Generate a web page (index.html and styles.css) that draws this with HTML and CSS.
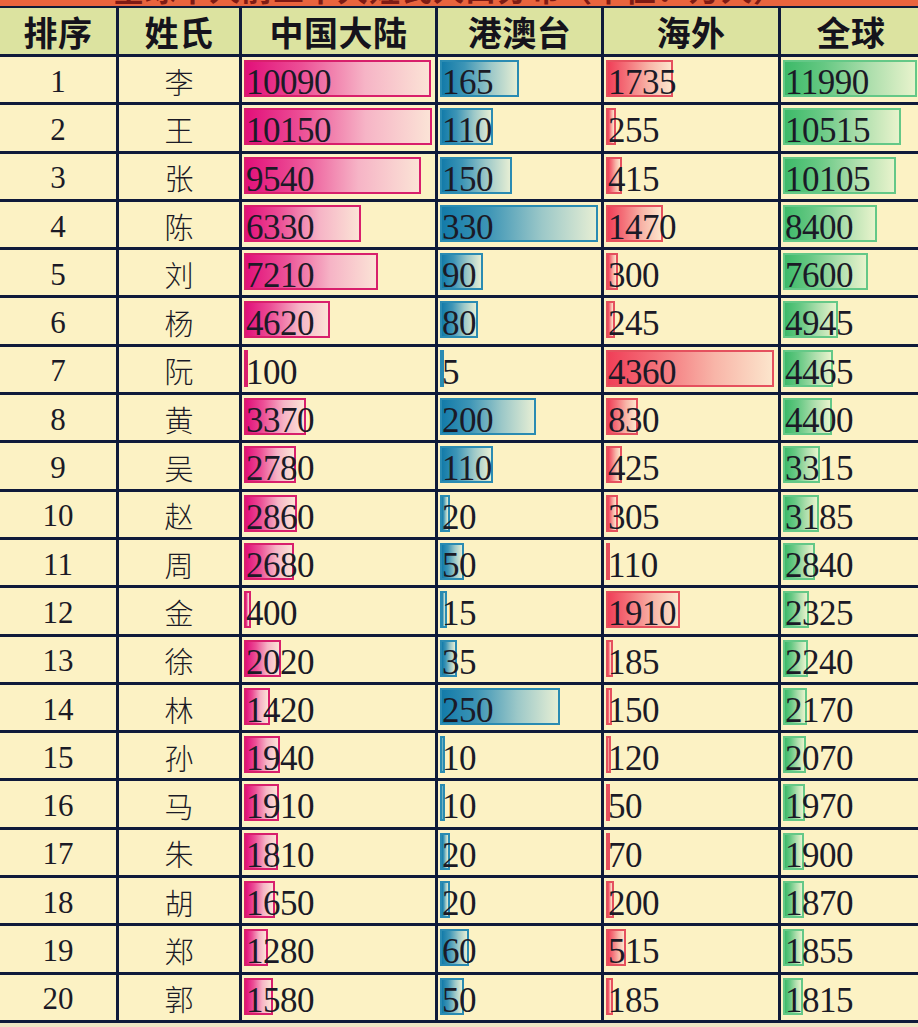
FILE: index.html
```html
<!DOCTYPE html>
<html lang="zh">
<head>
<meta charset="utf-8">
<title>姓氏排行</title>
<link rel="stylesheet" href="styles.css">
</head>
<body>
<div class="title"><span class="title-text">全球华人前二十大姓氏人口分布（单位：万人）</span></div>
<div class="table">
  <div class="h">排序</div><div class="h">姓氏</div><div class="h">中国大陆</div><div class="h">港澳台</div><div class="h">海外</div><div class="h">全球</div>

  <div class="c rank">1</div><div class="c name">李</div>
  <div class="c v"><i class="bar pink" style="width:187px"></i><span class="num">10090</span></div>
  <div class="c v"><i class="bar blue" style="width:79px"></i><span class="num">165</span></div>
  <div class="c v"><i class="bar red" style="width:67px"></i><span class="num">1735</span></div>
  <div class="c v"><i class="bar green" style="width:134px"></i><span class="num">11990</span></div>

  <div class="c rank">2</div><div class="c name">王</div>
  <div class="c v"><i class="bar pink" style="width:188px"></i><span class="num">10150</span></div>
  <div class="c v"><i class="bar blue" style="width:53px"></i><span class="num">110</span></div>
  <div class="c v"><i class="bar red" style="width:10px"></i><span class="num">255</span></div>
  <div class="c v"><i class="bar green" style="width:118px"></i><span class="num">10515</span></div>

  <div class="c rank">3</div><div class="c name">张</div>
  <div class="c v"><i class="bar pink" style="width:177px"></i><span class="num">9540</span></div>
  <div class="c v"><i class="bar blue" style="width:72px"></i><span class="num">150</span></div>
  <div class="c v"><i class="bar red" style="width:16px"></i><span class="num">415</span></div>
  <div class="c v"><i class="bar green" style="width:113px"></i><span class="num">10105</span></div>

  <div class="c rank">4</div><div class="c name">陈</div>
  <div class="c v"><i class="bar pink" style="width:117px"></i><span class="num">6330</span></div>
  <div class="c v"><i class="bar blue" style="width:158px"></i><span class="num">330</span></div>
  <div class="c v"><i class="bar red" style="width:57px"></i><span class="num">1470</span></div>
  <div class="c v"><i class="bar green" style="width:94px"></i><span class="num">8400</span></div>

  <div class="c rank">5</div><div class="c name">刘</div>
  <div class="c v"><i class="bar pink" style="width:134px"></i><span class="num">7210</span></div>
  <div class="c v"><i class="bar blue" style="width:43px"></i><span class="num">90</span></div>
  <div class="c v"><i class="bar red" style="width:12px"></i><span class="num">300</span></div>
  <div class="c v"><i class="bar green" style="width:85px"></i><span class="num">7600</span></div>

  <div class="c rank">6</div><div class="c name">杨</div>
  <div class="c v"><i class="bar pink" style="width:86px"></i><span class="num">4620</span></div>
  <div class="c v"><i class="bar blue" style="width:38px"></i><span class="num">80</span></div>
  <div class="c v"><i class="bar red" style="width:9px"></i><span class="num">245</span></div>
  <div class="c v"><i class="bar green" style="width:55px"></i><span class="num">4945</span></div>

  <div class="c rank">7</div><div class="c name">阮</div>
  <div class="c v"><i class="bar pink" style="width:3px"></i><span class="num">100</span></div>
  <div class="c v"><i class="bar blue" style="width:3px"></i><span class="num">5</span></div>
  <div class="c v"><i class="bar red" style="width:168px"></i><span class="num">4360</span></div>
  <div class="c v"><i class="bar green" style="width:50px"></i><span class="num">4465</span></div>

  <div class="c rank">8</div><div class="c name">黄</div>
  <div class="c v"><i class="bar pink" style="width:62px"></i><span class="num">3370</span></div>
  <div class="c v"><i class="bar blue" style="width:96px"></i><span class="num">200</span></div>
  <div class="c v"><i class="bar red" style="width:32px"></i><span class="num">830</span></div>
  <div class="c v"><i class="bar green" style="width:49px"></i><span class="num">4400</span></div>

  <div class="c rank">9</div><div class="c name">吴</div>
  <div class="c v"><i class="bar pink" style="width:52px"></i><span class="num">2780</span></div>
  <div class="c v"><i class="bar blue" style="width:53px"></i><span class="num">110</span></div>
  <div class="c v"><i class="bar red" style="width:16px"></i><span class="num">425</span></div>
  <div class="c v"><i class="bar green" style="width:37px"></i><span class="num">3315</span></div>

  <div class="c rank">10</div><div class="c name">赵</div>
  <div class="c v"><i class="bar pink" style="width:53px"></i><span class="num">2860</span></div>
  <div class="c v"><i class="bar blue" style="width:10px"></i><span class="num">20</span></div>
  <div class="c v"><i class="bar red" style="width:12px"></i><span class="num">305</span></div>
  <div class="c v"><i class="bar green" style="width:36px"></i><span class="num">3185</span></div>

  <div class="c rank">11</div><div class="c name">周</div>
  <div class="c v"><i class="bar pink" style="width:50px"></i><span class="num">2680</span></div>
  <div class="c v"><i class="bar blue" style="width:24px"></i><span class="num">50</span></div>
  <div class="c v"><i class="bar red" style="width:4px"></i><span class="num">110</span></div>
  <div class="c v"><i class="bar green" style="width:32px"></i><span class="num">2840</span></div>

  <div class="c rank">12</div><div class="c name">金</div>
  <div class="c v"><i class="bar pink" style="width:7px"></i><span class="num">400</span></div>
  <div class="c v"><i class="bar blue" style="width:7px"></i><span class="num">15</span></div>
  <div class="c v"><i class="bar red" style="width:74px"></i><span class="num">1910</span></div>
  <div class="c v"><i class="bar green" style="width:26px"></i><span class="num">2325</span></div>

  <div class="c rank">13</div><div class="c name">徐</div>
  <div class="c v"><i class="bar pink" style="width:37px"></i><span class="num">2020</span></div>
  <div class="c v"><i class="bar blue" style="width:17px"></i><span class="num">35</span></div>
  <div class="c v"><i class="bar red" style="width:7px"></i><span class="num">185</span></div>
  <div class="c v"><i class="bar green" style="width:25px"></i><span class="num">2240</span></div>

  <div class="c rank">14</div><div class="c name">林</div>
  <div class="c v"><i class="bar pink" style="width:26px"></i><span class="num">1420</span></div>
  <div class="c v"><i class="bar blue" style="width:120px"></i><span class="num">250</span></div>
  <div class="c v"><i class="bar red" style="width:6px"></i><span class="num">150</span></div>
  <div class="c v"><i class="bar green" style="width:24px"></i><span class="num">2170</span></div>

  <div class="c rank">15</div><div class="c name">孙</div>
  <div class="c v"><i class="bar pink" style="width:36px"></i><span class="num">1940</span></div>
  <div class="c v"><i class="bar blue" style="width:5px"></i><span class="num">10</span></div>
  <div class="c v"><i class="bar red" style="width:5px"></i><span class="num">120</span></div>
  <div class="c v"><i class="bar green" style="width:23px"></i><span class="num">2070</span></div>

  <div class="c rank">16</div><div class="c name">马</div>
  <div class="c v"><i class="bar pink" style="width:35px"></i><span class="num">1910</span></div>
  <div class="c v"><i class="bar blue" style="width:5px"></i><span class="num">10</span></div>
  <div class="c v"><i class="bar red" style="width:3px"></i><span class="num">50</span></div>
  <div class="c v"><i class="bar green" style="width:22px"></i><span class="num">1970</span></div>

  <div class="c rank">17</div><div class="c name">朱</div>
  <div class="c v"><i class="bar pink" style="width:34px"></i><span class="num">1810</span></div>
  <div class="c v"><i class="bar blue" style="width:10px"></i><span class="num">20</span></div>
  <div class="c v"><i class="bar red" style="width:3px"></i><span class="num">70</span></div>
  <div class="c v"><i class="bar green" style="width:21px"></i><span class="num">1900</span></div>

  <div class="c rank">18</div><div class="c name">胡</div>
  <div class="c v"><i class="bar pink" style="width:31px"></i><span class="num">1650</span></div>
  <div class="c v"><i class="bar blue" style="width:10px"></i><span class="num">20</span></div>
  <div class="c v"><i class="bar red" style="width:8px"></i><span class="num">200</span></div>
  <div class="c v"><i class="bar green" style="width:21px"></i><span class="num">1870</span></div>

  <div class="c rank">19</div><div class="c name">郑</div>
  <div class="c v"><i class="bar pink" style="width:24px"></i><span class="num">1280</span></div>
  <div class="c v"><i class="bar blue" style="width:29px"></i><span class="num">60</span></div>
  <div class="c v"><i class="bar red" style="width:20px"></i><span class="num">515</span></div>
  <div class="c v"><i class="bar green" style="width:21px"></i><span class="num">1855</span></div>

  <div class="c rank">20</div><div class="c name">郭</div>
  <div class="c v"><i class="bar pink" style="width:29px"></i><span class="num">1580</span></div>
  <div class="c v"><i class="bar blue" style="width:24px"></i><span class="num">50</span></div>
  <div class="c v"><i class="bar red" style="width:7px"></i><span class="num">185</span></div>
  <div class="c v"><i class="bar green" style="width:20px"></i><span class="num">1815</span></div>
</div>
</body>
</html>
```

FILE: styles.css
```css
html, body {
  margin: 0;
  padding: 0;
}
body {
  background: #efe6c4;
  overflow: hidden;
  width: 918px;
  height: 1027px;
  color: #1b1a26;
}
.title {
  height: 6px;
  overflow: hidden;
  background: #e9643e;
  display: flex;
  align-items: flex-end;
  justify-content: center;
  padding-right: 20px;
}
.title-text {
  font-family: "Noto Sans CJK SC", sans-serif;
  font-weight: 700;
  font-size: 31px;
  line-height: 31px;
  color: #7e1a14;
  flex: none;
  margin-bottom: 3px;
  letter-spacing: 1px;
}
.table {
  display: grid;
  grid-template-columns: 116px 120px 193px 163px 174px 140px;
  grid-template-rows: 46px repeat(20, 45.3px);
  column-gap: 3px;
  row-gap: 3px;
  background: #0f1a3a;
  padding: 2px 0 3px 0;
  width: 930px;
}
.h {
  background: #dce3a0;
  font-family: "Noto Sans CJK SC", sans-serif;
  font-weight: 700;
  font-size: 34px;
  letter-spacing: 0.5px;
  display: flex;
  align-items: center;
  justify-content: center;
  color: #15131c;
  line-height: 1;
  padding-top: 1px;
}
.c {
  background: #fcf2c4;
}
.rank {
  font-family: "Liberation Serif", serif;
  font-size: 31px;
  display: flex;
  align-items: center;
  justify-content: center;
  padding-top: 4px;
}
.name {
  font-family: "Noto Sans CJK SC", sans-serif;
  font-weight: 300;
  font-size: 29px;
  display: flex;
  align-items: center;
  justify-content: center;
  padding-top: 2px;
}
.v {
  display: grid;
  align-items: start;
  justify-items: start;
  padding-left: 2px;
}
.bar, .num {
  grid-area: 1 / 1;
}
.bar {
  display: block;
  box-sizing: border-box;
  height: 37px;
  margin-top: 3px;
  border: 2px solid;
  min-width: 3px;
}
.num {
  font-family: "Liberation Serif", serif;
  font-size: 35px;
  line-height: 34px;
  margin-top: 9px;
  padding-left: 2px;
  position: relative;
  letter-spacing: -0.5px;
}
.pink {
  border-color: #d81f6c;
  background: linear-gradient(90deg, #e2107a 0%, #ec4f96 30%, #f6b4c6 65%, #fbe3d6 100%);
}
.blue {
  border-color: #2a8bb2;
  background: linear-gradient(90deg, #137ba9 0%, #3d95b6 30%, #9cc8c8 65%, #e6eed4 100%);
}
.red {
  border-color: #e5505e;
  background: linear-gradient(90deg, #f03f58 0%, #f4727a 30%, #f8b5a8 65%, #fce5cc 100%);
}
.green {
  border-color: #64c887;
  background: linear-gradient(90deg, #3dba69 0%, #66c883 30%, #acdeac 65%, #e8f3cc 100%);
}
```
